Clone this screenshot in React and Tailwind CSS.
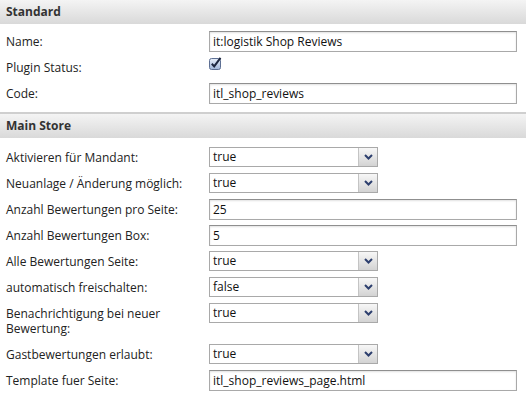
const font = { fontFamily: '"Open Sans", "Liberation Sans", sans-serif' };

const Header = ({ title, top }) => (
  <div
    className={`h-[24px] flex items-center pl-[6px] bg-gradient-to-b from-[#f4f4f4] to-[#d9d9d9] text-[12px] font-bold text-[#333] ${top ? '' : 'border-t-2 border-[#cfcfcf] h-[26px]'}`}
  >
    {title}
  </div>
);

const TextInput = ({ value }) => (
  <div className="mt-[3px] h-[21px] w-[308px] border border-[#a9a9a9] border-t-[#8f8f8f] bg-white shadow-[inset_0_1px_2px_rgba(0,0,0,0.12)] flex items-center pl-[3px] text-[12px] text-[#111]">
    {value}
  </div>
);

const Select = ({ value }) => (
  <div className="mt-[3px] h-[20px] w-[169px] border border-[#a9a9a9] bg-white flex items-stretch text-[12px] text-[#111]">
    <div className="flex-1 flex items-center pl-[3px]">{value}</div>
    <div className="w-[19px] border-l border-[#c4c4c4] bg-gradient-to-b from-[#f7f7f7] to-[#d3d3d3] flex items-center justify-center">
      <svg width="9" height="6" viewBox="0 0 9 6">
        <path d="M1 1 L4.5 4.5 L8 1" fill="none" stroke="#2d3f6e" strokeWidth="2" />
      </svg>
    </div>
  </div>
);

const Checkbox = () => (
  <div className="mt-[3px]">
    <svg width="13" height="13" viewBox="0 0 13 13">
      <defs>
        <linearGradient id="cb" x1="0" y1="0" x2="0" y2="1">
          <stop offset="0" stopColor="#e9f0fb" />
          <stop offset="1" stopColor="#9fb5d8" />
        </linearGradient>
      </defs>
      <rect x="0.5" y="1.5" width="11" height="11" rx="2" fill="url(#cb)" stroke="#5d6f93" />
      <path d="M2.8 6.8 L5.2 9.4 L11.5 0.8" fill="none" stroke="#1d2740" strokeWidth="2" />
    </svg>
  </div>
);

const Row = ({ label, children }) => (
  <div className="flex items-start">
    <div className="w-[209px] pl-[6px] pr-[16px] pt-[6px] pb-[5px] leading-[15px] text-[12px] text-[#222]">{label}</div>
    {children}
  </div>
);

export default function App() {
  return (
    <div className="w-[526px] h-[396px] bg-white overflow-hidden" style={font}>
      <Header title="Standard" top />
      <div className="pt-[4px] pb-[6px]">
        <Row label="Name:"><TextInput value="it:logistik Shop Reviews" /></Row>
        <Row label="Plugin Status:"><Checkbox /></Row>
        <Row label="Code:"><TextInput value="itl_shop_reviews" /></Row>
      </div>
      <Header title="Main Store" />
      <div className="pt-[6px]">
        <Row label="Aktivieren für Mandant:"><Select value="true" /></Row>
        <Row label="Neuanlage / Änderung möglich:"><Select value="true" /></Row>
        <Row label="Anzahl Bewertungen pro Seite:"><TextInput value="25" /></Row>
        <Row label="Anzahl Bewertungen Box:"><TextInput value="5" /></Row>
        <Row label="Alle Bewertungen Seite:"><Select value="true" /></Row>
        <Row label="automatisch freischalten:"><Select value="false" /></Row>
        <Row label="Benachrichtigung bei neuer Bewertung:"><Select value="true" /></Row>
        <Row label="Gastbewertungen erlaubt:"><Select value="true" /></Row>
        <Row label="Template fuer Seite:"><TextInput value="itl_shop_reviews_page.html" /></Row>
      </div>
    </div>
  );
}
